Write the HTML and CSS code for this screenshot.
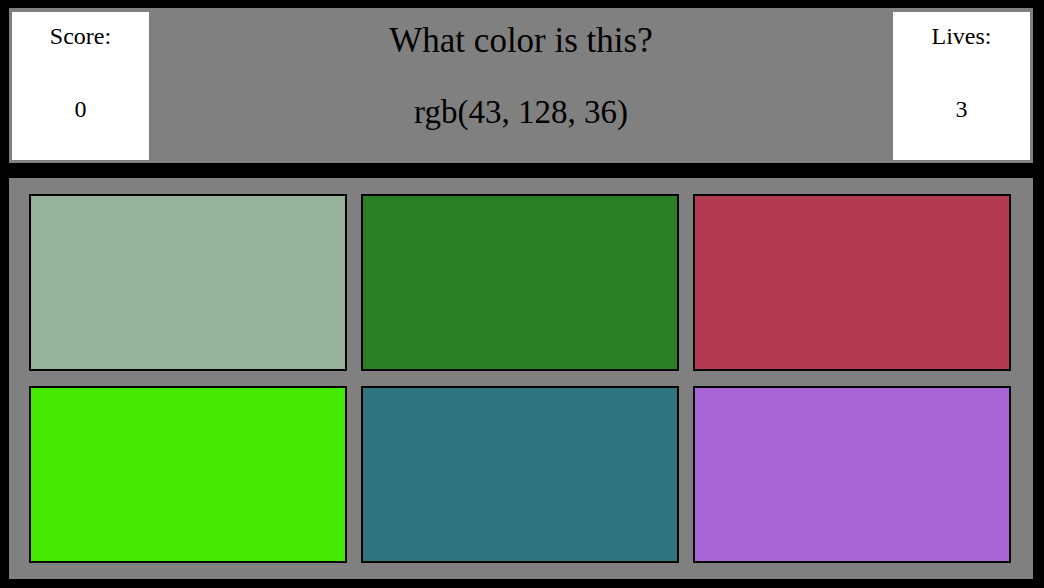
FILE: index.html
```html
<!DOCTYPE html>
<html lang="en">
<head>
    <meta charset="UTF-8">
    <title>Color Game</title>
    <link rel="stylesheet" href="styles.css">
</head>
<body>
<div class="game">
    <div class="header">
        <div class="stat">
            <p class="stat-label">Score:</p>
            <p class="stat-value" id="score">0</p>
        </div>
        <div class="question">
            <h1 class="title">What color is this?</h1>
            <h1 class="target" id="target">rgb(43, 128, 36)</h1>
        </div>
        <div class="stat">
            <p class="stat-label">Lives:</p>
            <p class="stat-value" id="lives">3</p>
        </div>
    </div>
    <div class="board">
        <div class="tile" style="background: rgb(150, 180, 155);"></div>
        <div class="tile" style="background: rgb(43, 128, 36);"></div>
        <div class="tile" style="background: rgb(179, 58, 82);"></div>
        <div class="tile" style="background: rgb(69, 232, 0);"></div>
        <div class="tile" style="background: rgb(48, 116, 128);"></div>
        <div class="tile" style="background: rgb(168, 101, 216);"></div>
    </div>
</div>
</body>
</html>
```
FILE: styles.css
```css
* {
    margin: 0;
    padding: 0;
    box-sizing: border-box;
}

body {
    background: #000;
    font-family: "Liberation Serif", "Times New Roman", serif;
    color: #000;
}

.game {
    width: 1024px;
    margin: 8px 0 0 9px;
}

.header {
    display: flex;
    height: 155px;
    padding: 4px 3px 3px 3px;
    background: #808080;
}

.stat {
    width: 137px;
    background: #fff;
    text-align: center;
    padding-top: 10px;
}

.stat-label,
.stat-value {
    font-size: 24px;
    line-height: 28px;
}

.stat-value {
    margin-top: 45px;
}

.question {
    flex: 1;
    text-align: center;
    padding-top: 9px;
}

.title,
.target {
    font-weight: normal;
    line-height: 40px;
}

.title {
    font-size: 35px;
}

.target {
    font-size: 33px;
    margin-top: 31px;
}

.board {
    display: grid;
    grid-template-columns: repeat(3, 318px);
    grid-auto-rows: 177px;
    column-gap: 14px;
    row-gap: 15px;
    margin-top: 15px;
    padding: 16px 22px 16px 20px;
    background: #808080;
}

.tile {
    border: 2px solid #000;
    cursor: pointer;
}
```
